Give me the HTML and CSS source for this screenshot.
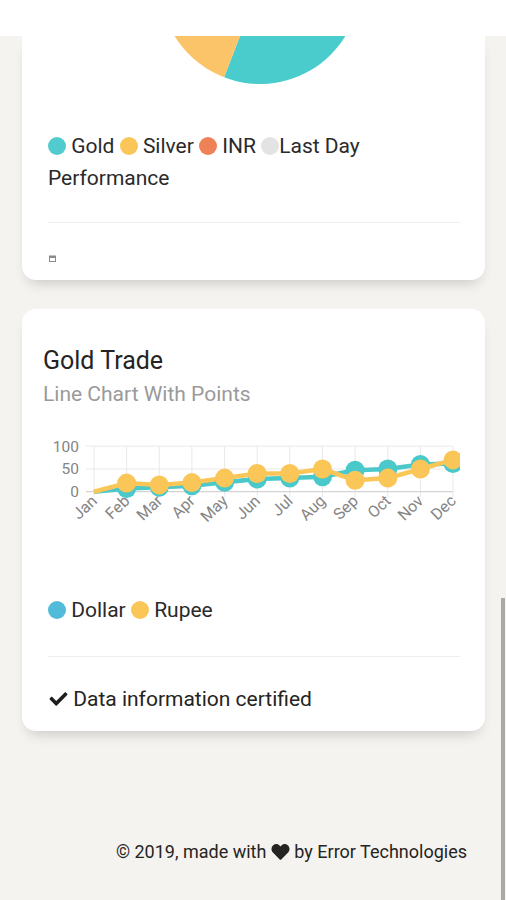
FILE: index.html
```html
<!DOCTYPE html>
<html lang="en">
<head>
<meta charset="utf-8">
<title>Dashboard</title>
<link rel="stylesheet" href="styles.css">
</head>
<body>
<div class="topbar"></div>
<main class="content">
  <section class="card card-cut">
    <div class="pie-window">
      <svg class="pie" width="200" height="48" viewBox="-100 52 200 48">
        <path d="M0,0 L0,-100 A100,100 0 0,1 99.38,-11.08 Z" fill="#e3e3e3"/>
        <path d="M0,0 L99.38,-11.08 A100,100 0 0,1 -35.89,93.34 Z" fill="#4acccd"/>
        <path d="M0,0 L-35.89,93.34 A100,100 0 0,1 -49.02,-87.16 Z" fill="#fcc468"/>
        <path d="M0,0 L-49.02,-87.16 A100,100 0 0,1 0,-100 Z" fill="#ef8157"/>
      </svg>
    </div>
    <div class="card-footer">
      <div class="legend legend-pie"><span class="dot dot-teal"></span> <span class="lbl">Gold</span> <span class="dot dot-yellow"></span> <span class="lbl">Silver</span> <span class="dot dot-orange"></span> <span class="lbl">INR</span> <span class="dot dot-gray"></span><span class="lbl">Last Day</span> <span class="lbl">Performance</span></div>
      <hr class="divider">
      <div class="stats stats-small">
        <svg class="cal" width="7" height="7" viewBox="0 0 7 7"><rect x="0.5" y="1" width="6" height="5.5" fill="none" stroke="#8a8a8a" stroke-width="1"/><rect x="0.5" y="1" width="6" height="2" fill="#8a8a8a"/></svg>
      </div>
    </div>
  </section>

  <section class="card card-trade">
    <div class="card-header">
      <h4 class="card-title">Gold Trade</h4>
      <p class="card-category">Line Chart With Points</p>
    </div>
    <svg class="line-chart" width="420" height="100" viewBox="0 0 420 100">
      <g class="grid" stroke="#e9e9e9" stroke-width="1">
        <line x1="46" y1="14.2" x2="413" y2="14.2"/>
        <line x1="46" y1="37" x2="413" y2="37"/>
        <line x1="54" y1="14.2" x2="54" y2="65"/>
        <line x1="86.6" y1="14.2" x2="86.6" y2="65"/>
        <line x1="119.3" y1="14.2" x2="119.3" y2="65"/>
        <line x1="151.9" y1="14.2" x2="151.9" y2="65"/>
        <line x1="184.6" y1="14.2" x2="184.6" y2="65"/>
        <line x1="217.2" y1="14.2" x2="217.2" y2="65"/>
        <line x1="249.8" y1="14.2" x2="249.8" y2="65"/>
        <line x1="282.5" y1="14.2" x2="282.5" y2="65"/>
        <line x1="315.1" y1="14.2" x2="315.1" y2="65"/>
        <line x1="347.8" y1="14.2" x2="347.8" y2="65"/>
        <line x1="380.4" y1="14.2" x2="380.4" y2="65"/>
        <line x1="413" y1="14.2" x2="413" y2="65"/>
      </g>
      <line x1="46" y1="59.7" x2="413" y2="59.7" stroke="#d4d4d4" stroke-width="1.2"/>
      <g class="ylab">
        <text x="39" y="19.5">100</text>
        <text x="39" y="42.3">50</text>
        <text x="39" y="65">0</text>
      </g>
      <g class="xlab">
        <text transform="translate(58,70) rotate(-44)">Jan</text>
        <text transform="translate(90.6,70) rotate(-44)">Feb</text>
        <text transform="translate(123.3,70) rotate(-44)">Mar</text>
        <text transform="translate(155.9,70) rotate(-44)">Apr</text>
        <text transform="translate(188.6,70) rotate(-44)">May</text>
        <text transform="translate(221.2,70) rotate(-44)">Jun</text>
        <text transform="translate(253.8,70) rotate(-44)">Jul</text>
        <text transform="translate(286.5,70) rotate(-44)">Aug</text>
        <text transform="translate(319.1,70) rotate(-44)">Sep</text>
        <text transform="translate(351.8,70) rotate(-44)">Oct</text>
        <text transform="translate(384.4,70) rotate(-44)">Nov</text>
        <text transform="translate(417,70) rotate(-44)">Dec</text>
      </g>
      <polyline fill="none" stroke="#4ac8ca" stroke-width="4.5" stroke-linejoin="round" points="54,59.7 86.6,56.5 119.3,55.2 151.9,53.8 184.6,50.2 217.2,47 249.8,46.1 282.5,44.7 315.1,38.3 347.8,37 380.4,32.4 413,31.5"/>
      <g fill="#4ac8ca">
        <circle cx="86.6" cy="56.5" r="9.5"/>
        <circle cx="119.3" cy="55.2" r="9.5"/>
        <circle cx="151.9" cy="53.8" r="9.5"/>
        <circle cx="184.6" cy="50.2" r="9.5"/>
        <circle cx="217.2" cy="47" r="9.5"/>
        <circle cx="249.8" cy="46.1" r="9.5"/>
        <circle cx="282.5" cy="44.7" r="9.5"/>
        <circle cx="315.1" cy="38.3" r="9.5"/>
        <circle cx="347.8" cy="37" r="9.5"/>
        <circle cx="380.4" cy="32.4" r="9.5"/>
        <circle cx="413" cy="31.5" r="9.5"/>
      </g>
      <polyline fill="none" stroke="#fbc658" stroke-width="4.5" stroke-linejoin="round" points="54,59.7 86.6,51.1 119.3,52.9 151.9,50.6 184.6,46.1 217.2,41.5 249.8,41.5 282.5,37 315.1,48.3 347.8,46.1 380.4,37 413,27.9"/>
      <g fill="#fbc658">
        <circle cx="86.6" cy="51.1" r="9.5"/>
        <circle cx="119.3" cy="52.9" r="9.5"/>
        <circle cx="151.9" cy="50.6" r="9.5"/>
        <circle cx="184.6" cy="46.1" r="9.5"/>
        <circle cx="217.2" cy="41.5" r="9.5"/>
        <circle cx="249.8" cy="41.5" r="9.5"/>
        <circle cx="282.5" cy="37" r="9.5"/>
        <circle cx="315.1" cy="48.3" r="9.5"/>
        <circle cx="347.8" cy="46.1" r="9.5"/>
        <circle cx="380.4" cy="37" r="9.5"/>
        <circle cx="413" cy="27.9" r="9.5"/>
      </g>
    </svg>
    <div class="card-footer">
      <div class="legend legend-line"><span class="dot dot-blue"></span> <span class="lbl">Dollar</span> <span class="dot dot-yellow"></span> <span class="lbl">Rupee</span></div>
      <hr class="divider">
      <div class="stats"><svg class="check" width="19" height="18" viewBox="0 0 512 512"><path d="M173.898 439.404l-166.4-166.4c-9.997-9.997-9.997-26.206 0-36.204l36.203-36.204c9.997-9.998 26.207-9.998 36.204 0L192 312.69 432.095 72.596c9.997-9.997 26.207-9.997 36.204 0l36.203 36.204c9.997 9.997 9.997 26.206 0 36.204l-294.4 294.401c-9.998 9.997-26.207 9.997-36.204-.001z" fill="#1e1e1e"/></svg> Data information certified</div>
    </div>
  </section>

  <footer class="footer">© 2019, made with <svg class="heart" width="19" height="18" viewBox="0 0 512 512"><path d="M462.3 62.6C407.5 15.9 326 24.3 275.7 76.2L256 96.5l-19.7-20.3C186.1 24.3 104.5 15.9 49.7 62.6c-62.8 53.6-66.1 149.8-9.9 207.9l193.5 199.8c12.5 12.9 32.8 12.9 45.3 0l193.5-199.8c56.3-58.1 53-154.3-9.8-207.9z" fill="#252422"/></svg> by Error Technologies</footer>
</main>
<div class="scrollbar"></div>
</body>
</html>
```

FILE: styles.css
```css
* {
  box-sizing: border-box;
}

html, body {
  margin: 0;
  padding: 0;
}

body {
  background: #f4f3ef;
  font-family: Roboto, "Noto Sans", "Liberation Sans", sans-serif;
  color: #252422;
  height: 900px;
  overflow: hidden;
}

.topbar {
  height: 36px;
  background: #ffffff;
}

.content {
  padding: 0 21px 0 22px;
}

.card {
  background: #ffffff;
  border-radius: 14px;
  box-shadow: 0 8px 14px -6px rgba(0, 0, 0, 0.2);
}

.card-cut {
  border-top-left-radius: 0;
  border-top-right-radius: 0;
  padding-bottom: 7px;
}

.pie-window {
  height: 48px;
  overflow: hidden;
  padding-left: 138px;
}

.pie {
  display: block;
}

.card-footer {
  padding: 0 25px 0 26px;
}

.legend {
  font-size: 21px;
  line-height: 32px;
  color: #2a2a2a;
}

.legend-pie {
  margin-top: 46px;
}

.dot {
  display: inline-block;
  width: 18px;
  height: 18px;
  border-radius: 50%;
  vertical-align: -2px;
}

.dot-teal { background: #51cbce; }
.dot-yellow { background: #fbc658; }
.dot-orange { background: #ef8157; }
.dot-gray { background: #e3e3e3; }
.dot-blue { background: #51bcda; }

.divider {
  border: 0;
  border-top: 1px solid #efefef;
  margin: 28px 0 0;
  height: 0;
}

.stats {
  font-size: 21px;
  line-height: 30px;
  color: #252422;
}

.stats-small {
  margin-top: 20px;
  height: 30px;
  display: flex;
  align-items: center;
  padding-left: 1px;
}

.cal {
  display: block;
}

.card-trade {
  margin-top: 29px;
  padding: 37px 0 17px;
}

.card-header {
  padding: 0 21px;
}

.card-title {
  margin: 0;
  font-size: 25px;
  line-height: 30px;
  font-weight: 400;
  color: #252422;
}

.card-category {
  margin: 5px 0 0;
  font-size: 21px;
  line-height: 26px;
  color: #9a9a9a;
}

.line-chart {
  display: block;
  margin: 25px 0 0 18px;
}

.ylab text {
  font-family: Roboto, "Liberation Sans", sans-serif;
  font-size: 15.5px;
  fill: #858585;
  text-anchor: end;
}

.xlab text {
  font-family: Roboto, "Liberation Sans", sans-serif;
  font-size: 16px;
  fill: #858585;
  text-anchor: end;
}

.legend-line {
  margin-top: 62px;
}

.card-trade .divider {
  margin-top: 30px;
}

.card-trade .stats {
  margin-top: 27px;
}

.check {
  display: inline-block;
  vertical-align: -2px;
  margin-left: 1px;
}

.footer {
  margin-top: 108px;
  padding-right: 18px;
  text-align: right;
  font-size: 18px;
  line-height: 26px;
  color: #252422;
}

.heart {
  display: inline-block;
  vertical-align: -3px;
}

.scrollbar {
  position: fixed;
  right: 1px;
  top: 598px;
  width: 4px;
  height: 302px;
  background: #a9a9a9;
}
```
